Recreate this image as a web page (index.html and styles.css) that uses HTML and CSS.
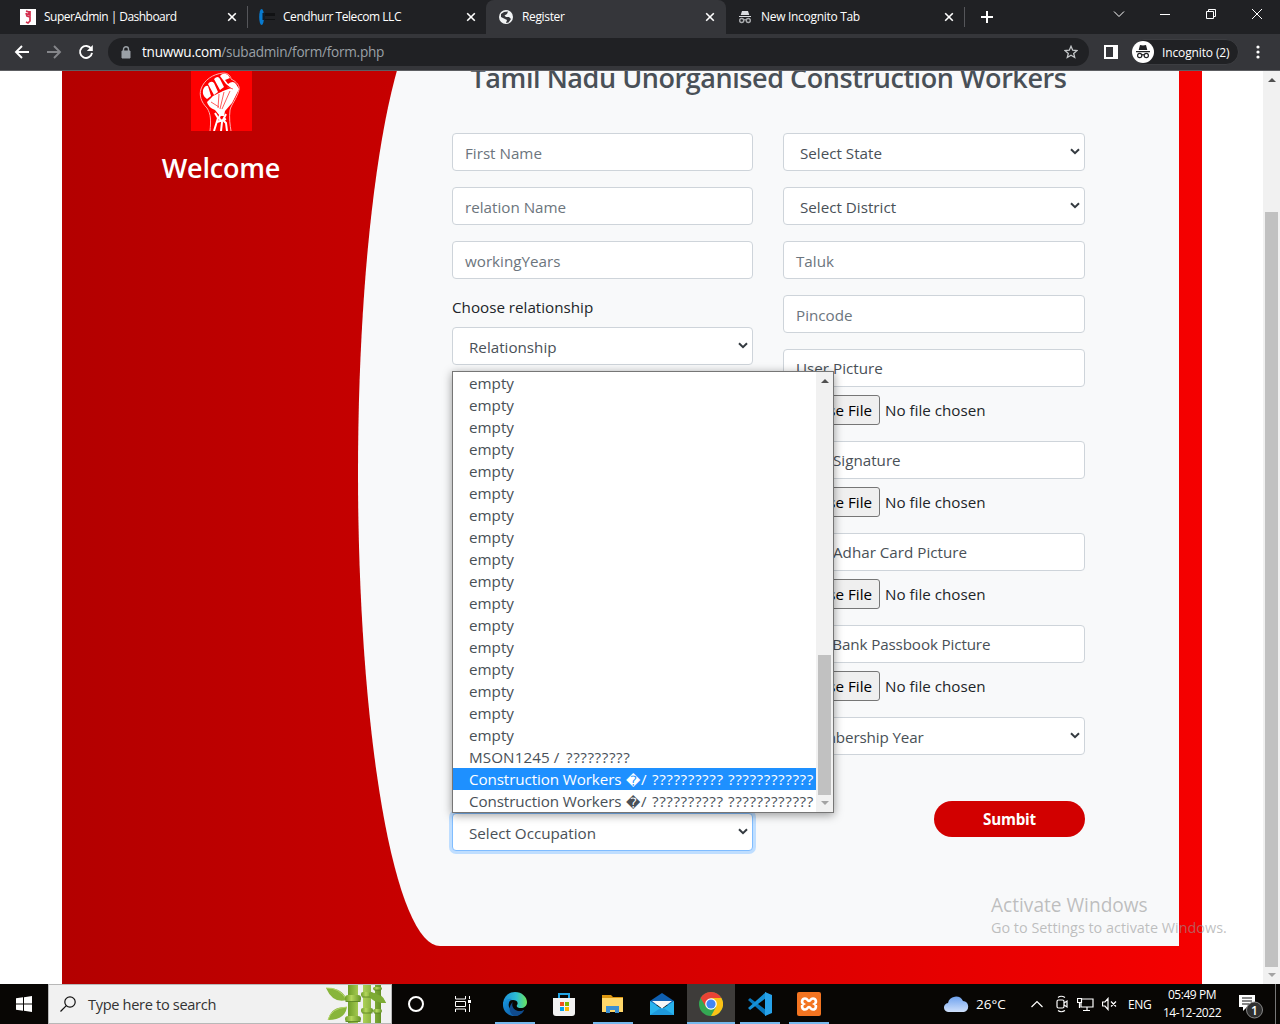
FILE: index.html
```html
<!DOCTYPE html>
<html lang="en">
<head>
<meta charset="utf-8">
<title>Register</title>
<link rel="stylesheet" href="styles.css">
</head>
<body>
<div class="screen">
  <header class="tabstrip">
    <div class="tab tab-first">
      <svg class="fav" viewBox="0 0 16 16"><path fill="#fff" d="M0 0h16v16H0z"/><path d="M6 2l3 1-1 2 2 1V2M6 4l1 3 3 1v4l-2 2-2-1" fill="none" stroke="#d3304f" stroke-width="1.7"/></svg>
      <span class="tab-t t1">SuperAdmin | Dashboard</span>
      <svg class="x" viewBox="0 0 10 10"><path d="M1.2 1.2l7.6 7.6M8.8 1.2L1.2 8.8"/></svg>
    </div>
    <div class="tab">
      <svg class="fav" viewBox="0 0 16 16"><path d="M6 4h10v3H6zM6 10h10v1H6z" fill="#111214"/><ellipse cx="2.6" cy="8" rx="2.4" ry="8" fill="#087bd0"/><path d="M3.5 4H6v7H3.500z" fill="#111b26"/></svg>
      <span class="tab-t t2">Cendhurr Telecom LLC</span>
      <svg class="x" viewBox="0 0 10 10"><path d="M1.2 1.2l7.6 7.6M8.8 1.2L1.2 8.8"/></svg>
    </div>
    <div class="tab active">
      <svg class="fav" viewBox="0 0 16 16"><circle cx="8" cy="8" r="7" fill="#f1f3f4"/><path d="M3 5l3-2 4-.5L9 5 6.500 6.500 8 8h3l2 2-2.500 3.500L8 14l1-3-3-1.500L3 8z" fill="#35363a"/></svg>
      <span class="tab-t t3">Register</span>
      <svg class="x" viewBox="0 0 10 10"><path d="M1.2 1.2l7.6 7.6M8.8 1.2L1.2 8.8"/></svg>
    </div>
    <div class="tab tab-last">
      <svg class="fav" viewBox="0 0 16 16"><path d="M5 2h6l1.300 4H3.700zM2 7h12v1H2z" fill="#dadce0"/><g fill="none" stroke="#a9abae" stroke-width="1.4"><circle cx="4.700" cy="11.500" r="2"/><circle cx="11.300" cy="11.500" r="2"/><path d="M6.700 11q1.300-.8 2.600 0"/></g></svg>
      <span class="tab-t t4">New Incognito Tab</span>
      <svg class="x" viewBox="0 0 10 10"><path d="M1.2 1.2l7.6 7.6M8.8 1.2L1.2 8.8"/></svg>
    </div>
    <svg class="plus" viewBox="0 0 12 12"><path d="M6 0v12M0 6h12"/></svg>
    <div class="winbtns">
      <svg viewBox="0 0 12 12"><path d="M1 3.500l5 5 5-5"/></svg>
      <svg viewBox="0 0 12 12"><path d="M1 6.500h10"/></svg>
      <svg viewBox="0 0 12 12"><path d="M1.500 3.500h7v7h-7zM3.500 3.500v-2h7v7h-2"/></svg>
      <svg viewBox="0 0 12 12"><path d="M1 1l10 10M11 1L1 11"/></svg>
    </div>
  </header>

  <nav class="toolbar">
    <svg class="nav" viewBox="0 0 16 16"><path d="M15 8H2M8 2L2 8l6 6" stroke="#fff"/></svg>
    <svg class="nav" viewBox="0 0 16 16"><path d="M1 8h13M8 2l6 6-6 6" stroke="#85868a"/></svg>
    <svg class="nav" viewBox="0 0 16 16"><path d="M13.200 4.800A6 6 0 1 0 14 8.800" stroke="#fff"/><path d="M14.800 1v6H8.800z" fill="#fff"/></svg>
    <div class="omni">
      <svg class="lock" viewBox="0 0 10 13"><path d="M1 5h8v7H1z" fill="#9aa0a6" stroke="#9aa0a6" stroke-linejoin="round"/><path d="M2.500 5V3.300a2.500 2.500 0 0 1 5 0V5" fill="none" stroke="#9aa0a6" stroke-width="1.4"/></svg>
      <span class="url"><b>tnuwwu.com</b>/subadmin/form/form.php</span>
      <svg class="star" viewBox="0 0 14 14"><path d="M7 1.300l1.700 3.900 4.200.4-3.200 2.800 1 4.100L7 10.300l-3.700 2.200 1-4.100L1.100 5.600l4.200-.4z"/></svg>
    </div>
    <svg class="panelicon" viewBox="0 0 14 14"><path d="M0 0h14v14H0zM2 2v10h7V2z" fill="#fff" fill-rule="evenodd"/></svg>
    <div class="chip">
      <svg viewBox="0 0 22 22"><circle cx="11" cy="11" r="11" fill="#fff"/><path d="M8 4l3 .6L14 4l1.300 5H6.700zM4 10h14v1.200H4z" fill="#202124"/><g fill="none" stroke="#202124" stroke-width="1.2"><circle cx="7.700" cy="14.500" r="2.100"/><circle cx="14.300" cy="14.500" r="2.100"/><path d="M9.800 14q1.200-.8 2.400 0"/></g></svg>
      <span>Incognito (2)</span>
    </div>
    <svg class="kebab" viewBox="0 0 4 14"><circle cx="2" cy="2" r="1.600"/><circle cx="2" cy="7" r="1.600"/><circle cx="2" cy="12" r="1.600"/></svg>
  </nav>

  <main class="viewport">
    <div class="page">
      <section class="register">
        <aside class="side">
          <svg class="fist" viewBox="0 0 61 61"><path fill="#f00" d="M0 0h61v61H0z"/>
            <path fill="none" stroke="#ffb0b0" d="M19 61c1-10 1-17-3-23-6-6-8-13-6-19 3-9 12-15 22-16 6 0 8 4 8 6 6 3 9 7 8 11-2 8-8 15-9 20-1 8 0 15 1 21"/>
            <path fill="#fff" d="M12 20q2-5 5-4l3 10-4 3q-5-3-4-9zM17 14q3-4 6-1l4 9-4 3zM23 9q4-4 6 0l4 8-4 3zM29 6q3-4 8-1l2 3-5 2 3 4q5-4 8 0l3 5-7 14-7 8-1 5h-4l-5-6q-7-3-8-8l6-6 10-5 8-3-5-4z"/>
            <path fill="none" stroke="#f33" stroke-width=".8" d="M20 32l8 5M28 24l-1 14M33 22l-4 17M39 21l-8 18M36 17l6 2"/>
            <path fill="none" stroke="#fff" stroke-width="2" d="M24 43l3 5-4 13M30 42l-2 6 3 4-1 9M35 44l-3 6 3 3 1 8M26 52l9-3"/>
          </svg>
          <h3>Welcome</h3>
        </aside>
        <div class="panel">
          <h3 class="heading"><span>Tamil Nadu Unorganised Construction Workers</span></h3>
          <form class="cols">
            <div class="col">
              <div class="field ph">First Name</div>
              <div class="field ph">relation Name</div>
              <div class="field ph">workingYears</div>
              <div class="group"><label class="lbl">Choose relationship</label>
                <div class="field sel">Relationship<svg class="caret" viewBox="0 0 10 7"><path d="M1 1.200l4 4 4-4"/></svg></div></div>
              <div class="field sel focus">Select Occupation<svg class="caret" viewBox="0 0 10 7"><path d="M1 1.200l4 4 4-4"/></svg></div>
            </div>
            <div class="col">
              <div class="field sel">Select State<svg class="caret" viewBox="0 0 10 7"><path d="M1 1.200l4 4 4-4"/></svg></div>
              <div class="field sel">Select District<svg class="caret" viewBox="0 0 10 7"><path d="M1 1.200l4 4 4-4"/></svg></div>
              <div class="field ph">Taluk</div>
              <div class="field ph">Pincode</div>
              <div class="group"><div class="field">User Picture</div><div class="file"><span class="fbtn">Choose File</span><span>No file chosen</span></div></div>
              <div class="group"><div class="field">User Signature</div><div class="file"><span class="fbtn">Choose File</span><span>No file chosen</span></div></div>
              <div class="group"><div class="field">User Adhar Card Picture</div><div class="file"><span class="fbtn">Choose File</span><span>No file chosen</span></div></div>
              <div class="group"><div class="field tight">User Bank Passbook Picture</div><div class="file"><span class="fbtn">Choose File</span><span>No file chosen</span></div></div>
              <div class="field sel tight">Membership Year<svg class="caret" viewBox="0 0 10 7"><path d="M1 1.200l4 4 4-4"/></svg></div>
              <div class="submit">Sumbit</div>
            </div>
          </form>
        </div>
      </section>
    </div>
    <div class="scroll page-scroll"><i class="up"></i><i class="thumb"></i><i class="down"></i></div>
  </main>

  <footer class="taskbar">
    <div class="start"><svg viewBox="0 0 16 16"><path fill="#fff" d="M0 2.300l7-1v6.200H0zM8 1.200L16 0v7.500H8zM0 8.500h7v6.200l-7-1zM8 8.500h8V16l-8-1.200z"/></svg></div>
    <div class="search">
      <svg class="mag" viewBox="0 0 16 16"><circle cx="10" cy="6" r="5.200"/><path d="M6.300 9.700L.5 15.500"/></svg>
      <span>Type here to search</span>
      <svg class="bamboo" viewBox="0 0 62 38">
        <defs><linearGradient id="bam"><stop offset="0" stop-color="#6f9e28"/><stop offset=".4" stop-color="#b4d75c"/><stop offset="1" stop-color="#659325"/></linearGradient></defs>
        <path d="M0 3q16-1 21 12Q7 19 0 3zM2 35q3-14 19-13-2 13-19 13zM40 8q16-3 20 10-12 1-17-7z" fill="#88b53b"/>
        <path d="M0 3q13-1 21 12M2 35q3-12 19-13" stroke="#b5d66c" fill="none"/>
        <g fill="url(#bam)"><path d="M22 0h10v38H22zM37 0h8v38h-8zM49 0h6v38h-6z"/><rect x="19" y="10" width="16" height="7" rx="3"/><rect x="19" y="31" width="16" height="6" rx="3"/><rect x="35" y="7" width="12" height="5" rx="2"/><rect x="35" y="23" width="12" height="5" rx="2"/><rect x="47" y="2" width="9" height="3" rx="1.500"/><rect x="47" y="24" width="9" height="4" rx="2"/></g>
        <path d="M19.500 16.500h15M19.500 36.500h15M36 12h10.500M36 28h10.500M48 5h7M48 28h7" stroke="#557d1e" stroke-width=".8"/>
        <path d="M43 8q12-1 17 10-9 1-17-7z" fill="#7dab34"/>
      </svg>
    </div>
    <div class="app w48"><svg width="18" height="18" viewBox="0 0 18 18"><circle cx="9" cy="9" r="7" fill="none" stroke="#fff" stroke-width="2"/></svg></div>
    <div class="app w50"><svg width="18" height="18" viewBox="0 0 18 18"><path d="M1.500 1v3h10V1M1.500 17v-3h10v3M1.500 6.500h10v5h-10zM15.500 1v3M15.500 9v8" fill="none" stroke="#fff"/><path d="M14 5h3v3h-3z" fill="#fff"/></svg></div>
    <div class="app run"><svg width="24" height="24" viewBox="0 0 24 24">
      <defs><linearGradient id="e1" x1="0" x2="1"><stop offset="0" stop-color="#1d8fd8"/><stop offset=".55" stop-color="#2cbcd5"/><stop offset="1" stop-color="#6be45c"/></linearGradient><linearGradient id="e2" x1="0" x2="1" y2="1"><stop offset="0" stop-color="#1797df"/><stop offset="1" stop-color="#0c4f9c"/></linearGradient></defs>
      <path d="M0 11C1 4 6 0 12 0c7 0 12 5 12 10 0 4-3 6-6 6-3 0-5-1-4-3 2-3-1-5-4-5-5 0-9 3-10 6z" fill="url(#e1)"/><path d="M0 13c0-4 4-7 9-6-3 2-4 5-3 8 2 5 9 6 15 3-2 4-6 6-10 6C5 24 0 19 0 13z" fill="url(#e2)"/><path d="M10 10c-2 3 0 8 5 9 3 .6 5 0 6-1-2 4-6 6-9 6-5-1-8-9-2-14z" fill="#104b8e"/></svg></div>
    <div class="app"><svg width="24" height="24" viewBox="0 0 24 24"><path d="M7 7V2h10v5" fill="none" stroke="#23a6e6" stroke-width="2"/><path d="M1 6h22v15q0 3-3 3H4q-3 0-3-3z" fill="#f2f2f2"/><path d="M8 10h4v4H8z" fill="#f25022"/><path d="M13 10h4v4h-4z" fill="#7fba00"/><path d="M8 15h4v4H8z" fill="#00a4ef"/><path d="M13 15h4v4h-4z" fill="#ffb900"/></svg></div>
    <div class="app run"><svg width="24" height="24" viewBox="0 0 24 24"><path d="M1 3h9l2 2h10v4H1z" fill="#dc9610"/><path d="M1 6h21v14H1z" fill="#ffd76a"/><path d="M5 21v-7h13v7h-4v-3H9v3z" fill="#3c8fd2"/></svg></div>
    <div class="app"><svg width="24" height="24" viewBox="0 0 24 24"><path d="M0 9l12-8 12 8v4H0z" fill="#0f5fb0"/><path d="M0 9v14h24V9l-12 8z" fill="#29b3ee"/><path d="M0 23l12-8 12 8z" fill="#1e98dc"/><path d="M2 9h20l-10 7.500z" fill="#f7f7f7"/></svg></div>
    <div class="app run current"><svg width="24" height="24" viewBox="0 0 24 24"><circle cx="12" cy="12" r="12" fill="#34a853"/><path d="M1.600 6A12 12 0 0 1 22.400 6H12L7 15z" fill="#ea4335"/><path d="M22.400 6A12 12 0 0 1 12 24l5-9-5-9z" fill="#fbc116"/><circle cx="12" cy="12" r="5.800" fill="#fff"/><circle cx="12" cy="12" r="4.600" fill="#4285f4"/></svg></div>
    <div class="app run"><svg width="24" height="24" viewBox="0 0 24 24"><path d="M0 8l2-2 16 12v6z" fill="#0877bd"/><path d="M0 16l2 2L18 6V0z" fill="#1690d6"/><path d="M17 0l7 3v18l-7 3z" fill="#27a2ea"/></svg></div>
    <div class="app run"><svg width="24" height="24" viewBox="0 0 24 24"><rect width="24" height="24" rx="2" fill="#f37421"/><path d="M8 6.500c3 0 2 2.500 4 2.500s1-2.500 4-2.500 4 4 1.500 5.500c2.500 1.500 1.500 5.500-1.500 5.500s-2-2.500-4-2.500-1 2.500-4 2.500S4 13.500 6.500 12C4 10.500 5 6.500 8 6.500z" fill="none" stroke="#fff" stroke-width="2.600"/></svg></div>
    <div class="tray">
      <svg width="25" height="18" viewBox="0 0 25 18"><defs><linearGradient id="cl" x1="0" y1="0" x2="0" y2="1"><stop offset="0" stop-color="#6fa2ee"/><stop offset="1" stop-color="#cfe0fb"/></linearGradient></defs><path d="M5 17a4.500 4.500 0 0 1-1-9 8 8 0 0 1 15-2 5.600 5.600 0 0 1 1 11z" fill="url(#cl)"/></svg>
      <span class="temp">26°C</span>
      <svg width="12" height="8" viewBox="0 0 12 8" class="line"><path d="M.5 7L6 1.500 11.500 7"/></svg>
      <svg width="12" height="18" viewBox="0 0 12 18" class="line"><rect x="1" y="5" width="7" height="8" rx="1.500"/><path d="M8 8l3-2v6l-3-2M2 2.500q3-2.500 7 0M2 15.500q3 2.500 7 0"/></svg>
      <svg width="17" height="16" viewBox="0 0 17 16" class="line"><path d="M5 3h11v8H4V7M10 11v3M6 14.500h7M.5 2.500h4v4h-4zM2.500 6v6"/></svg>
      <svg width="15" height="14" viewBox="0 0 15 14" class="line"><path d="M.5 5h2.500l3-3.500v11L3 9H.5zM9 4.500l5 5M14 4.500l-5 5"/></svg>
      <span class="lang">ENG</span>
      <div class="clock"><span>05:49 PM</span><span>14-12-2022</span></div>
      <svg width="25" height="26" viewBox="0 0 25 26" class="note"><path d="M1 2h16v12H9l-4 4v-4H1z" fill="#fff"/><path d="M4 5h10M4 8h10M4 11h7" stroke="#111"/><circle cx="16.500" cy="17" r="8" fill="#303030" stroke="#888"/><text x="16.500" y="21.500" text-anchor="middle">1</text></svg>
    </div>
  </footer>

  <div class="popup">
    <ul class="options">
      <li>empty</li><li>empty</li><li>empty</li><li>empty</li><li>empty</li><li>empty</li><li>empty</li><li>empty</li><li>empty</li><li>empty</li><li>empty</li><li>empty</li><li>empty</li><li>empty</li><li>empty</li><li>empty</li><li>empty</li>
      <li><span class="mson">MSON1245 /</span><span class="q1">?????????</span></li>
      <li class="hot"><span class="cw">Construction Workers</span><span class="rep">�</span><span class="sl">/</span><span class="q2">??????????</span><span class="q3">????????????</span></li>
      <li><span class="cw">Construction Workers</span><span class="rep">�</span><span class="sl">/</span><span class="q2">??????????</span><span class="q3">????????????</span></li>
    </ul>
    <div class="scroll pop-scroll"><i class="up"></i><i class="thumb"></i><i class="down"></i></div>
  </div>
  <div class="watermark"><div class="wm1">Activate Windows</div><div class="wm2">Go to Settings to activate Windows.</div></div>
</div>
</body>
</html>
```
FILE: styles.css
```css
* { box-sizing: border-box; }
body { margin: 0; font-family: "Open Sans", "Noto Sans", sans-serif; font-size: 15.2px; color: #212529; }
svg { display: block; flex: none; }
h3 { margin: 0; font-weight: 600; }
.screen { position: relative; width: 1280px; height: 1024px; overflow: hidden; display: flex; flex-direction: column; background: #fff; }

.tabstrip { height: 34px; flex: none; background: #202124; display: flex; align-items: center; color: #fff; font-size: 12px; }
.tab { width: 239px; height: 34px; display: flex; align-items: center; padding: 0 10px 0 11px; border-left: 1px solid transparent; flex: none; }
.tab-first { width: 247px; padding-left: 19px; padding-right: 10px; }
.tab:nth-child(2) { border-image: linear-gradient(transparent 7px, #55565a 7px, #55565a 27px, transparent 27px) 1; border-width: 0 0 0 1px; border-style: solid; }
.tab.active { background: #35363a; border-radius: 8px 8px 0 0; width: 240px; padding-right: 11px; }
.tab-last { border-left: 0; width: 239px; padding-right: 11px; background: linear-gradient(#55565a, #55565a) right center / 1px 20px no-repeat; }
.fav { width: 16px; height: 16px; margin-right: 8px; }
.tab-t { flex: 1; white-space: nowrap; margin-top: -1px; }
.t1 { letter-spacing: -.53px; }
.t2 { letter-spacing: -.45px; }
.t3 { letter-spacing: -.35px; }
.t4 { letter-spacing: -.3px; }
.x { width: 10px; height: 10px; stroke: #fff; stroke-width: 1.6; fill: none; }
.plus { width: 12px; height: 12px; margin-left: 16px; stroke: #fff; stroke-width: 2; }
.winbtns { display: flex; gap: 34px; margin: -6px 17px 0 auto; }
.winbtns svg { width: 12px; height: 12px; fill: none; stroke: #fff; }

.toolbar { height: 37px; flex: none; background: #35363a; border-bottom: 1px solid #5d5e62; display: flex; align-items: center; padding: 0 20px 0 14px; color: #fff; }
.nav { width: 16px; height: 16px; margin-right: 16px; fill: none; stroke-width: 1.9; }
.omni { width: 981px; height: 28px; margin-left: -2px; border-radius: 14px; background: #202124; display: flex; align-items: center; padding: 0 11px 0 13px; }
.lock { width: 10px; height: 13px; margin-right: 11px; }
.url { flex: 1; font-size: 13.6px; letter-spacing: -.25px; color: #9aa0a6; margin-top: -1px; }
.url b { font-weight: 400; color: #fff; }
.star { width: 14px; height: 14px; fill: none; stroke: #c4c7c9; stroke-width: 1.3; }
.panelicon { width: 14px; height: 14px; margin: 0 13px 0 15px; }
.chip { width: 108px; height: 26px; border-radius: 13px; background: #202124; border: 1px solid #3c3d41; display: flex; align-items: center; gap: 8px; font-size: 12px; letter-spacing: -.13px; white-space: nowrap; }
.chip svg { width: 22px; height: 22px; }
.kebab { width: 4px; height: 14px; margin-left: auto; fill: #fff; }

.viewport { height: 913px; flex: none; display: flex; overflow: hidden; background: #fff; }
.page { width: 1263px; padding-left: 62px; }
.register { width: 1140px; height: 1100px; margin-top: -71px; background: linear-gradient(90deg, #b30000, #f50000); display: flex; }
.side { width: 296px; padding: 71px 0 0 22px; display: flex; flex-direction: column; align-items: center; color: #fff; }
.fist { width: 61px; height: 61px; margin-top: -1px; }
.side h3 { font-size: 27px; letter-spacing: -.2px; line-height: 34px; margin-top: 20px; }
.panel { width: 821px; height: 946px; background: #f8f9fa; border-radius: 10% 0 0 10% / 50% 0 0 50%; padding: 61px 94px 0; color: #495057; }
.heading { font-size: 27px; letter-spacing: -.44px; line-height: 34px; text-align: center; white-space: nowrap; }
.cols { display: grid; grid-template-columns: 301px 302px; column-gap: 30px; margin-top: 38px; }
.col { display: flex; flex-direction: column; gap: 16px; }
.field { height: 38px; flex: none; border: 1px solid #ced4da; border-radius: 4px; background: #fff; padding: 0 12px; display: flex; align-items: center; justify-content: space-between; white-space: nowrap; color: #495057; }
.field.ph { color: #6c757d; padding-top: 1px; }
.field.sel { padding: 1px 4px 0 16px; }
.field.tight { letter-spacing: -.13px; }
.caret { width: 10px; height: 7px; margin-top: -2px; fill: none; stroke: #343a40; stroke-width: 2; }
.lbl { display: block; height: 24px; line-height: 25px; margin-bottom: 8px; color: #212529; }
.field.focus { margin-top: 432px; border-color: #80bdff; box-shadow: 0 0 0 3px #bfdeff; }
.file { display: flex; align-items: center; gap: 5px; height: 30px; margin-top: 8px; color: #212529; white-space: nowrap; }
.fbtn { width: 97px; height: 30px; border: 1px solid #767676; border-radius: 3px; background: #efefef; color: #000; line-height: 29px; text-align: right; padding-right: 7px; }
.submit { align-self: flex-end; width: 151px; height: 36px; margin-top: 30px; border-radius: 18px; background: #d20000; color: #fff; font-weight: 700; letter-spacing: -.2px; line-height: 36px; text-align: center; }

.scroll { width: 17px; background: #f1f1f1; display: flex; flex-direction: column; align-items: center; }
.scroll i { display: block; }
.up, .down { border: 4px solid transparent; border-top: 0; border-bottom: 4px solid #505050; }
.down { border-bottom: 0; border-top: 4px solid #a3a3a3; margin-bottom: 7px; }
.up { margin-top: 7px; }
.thumb { width: 13px; background: #c1c1c1; }
.page-scroll .thumb { height: 755px; margin-top: 130px; }
.page-scroll .down { margin-top: 6px; }

.popup { position: absolute; left: 452px; top: 371px; width: 382px; height: 442px; border: 1px solid #767676; background: #fff; display: flex; box-shadow: 0 2px 9px rgba(0,0,0,.4); }
.options { list-style: none; margin: 0; padding: 0; width: 363px; color: #495057; }
.options li { height: 22px; line-height: 23px; padding-left: 16px; display: flex; white-space: pre; }
.options .hot { background: #1e90ff; color: #fff; }
.mson { width: 97px; letter-spacing: .1px; }
.cw { width: 157px; letter-spacing: -.1px; }
.rep { width: 15px; font-family: "DejaVu Sans", sans-serif; font-size: 14px; line-height: 26px; }
.sl { width: 11px; }
.q2 { width: 76px; }
.q1, .q2, .q3 { letter-spacing: .6px; }
.pop-scroll .thumb { height: 140px; margin-top: 272px; }
.pop-scroll .down { margin-top: 6px; }

.taskbar { height: 40px; flex: none; background: #080604; display: flex; color: #fff; }
.start { width: 48px; display: flex; align-items: center; justify-content: center; }
.start svg { width: 16px; height: 16px; }
.search { width: 344px; height: 40px; background: #f1f1f1; border: 1px solid #b8b8b8; display: flex; align-items: center; color: #333; padding-left: 11px; }
.mag { width: 16px; height: 16px; margin-right: 12px; fill: none; stroke: #111; stroke-width: 1.2; }
.bamboo { width: 62px; height: 38px; margin-left: auto; margin-right: 3px; }
.search span { font-size: 14.6px; letter-spacing: -.33px; white-space: nowrap; }
.app { width: 49px; display: flex; align-items: center; justify-content: center; }
.w48 { width: 48px; }
.w50 { width: 50px; padding-right: 5px; }
.run { background: linear-gradient(#76b9ed, #76b9ed) bottom / 40px 2px no-repeat; }
.current { background: linear-gradient(#76b9ed, #76b9ed) bottom / 100% 2px no-repeat, #3e3c3a; width: 48px; margin-left: 1px; }
.tray { flex: 1; display: flex; align-items: center; padding-left: 111px; border-right: 1px solid #777; margin-right: 4px; }
.temp { font-size: 13.5px; width: 55px; margin-left: 7px; }
.line { fill: none; stroke: #fff; stroke-width: 1.2; margin-right: 13px; }
.line + .line { margin-right: 9px; }
.line:nth-of-type(4) { margin-right: 8px; }
.lang { font-size: 12px; letter-spacing: -.3px; width: 35px; margin-left: 2px; }
.clock { width: 58px; display: flex; flex-direction: column; align-items: center; font-size: 12px; line-height: 18px; white-space: nowrap; letter-spacing: -.45px; margin-top: -1px; }
.note { margin-left: 17px; margin-top: 4px; }
.note text { fill: #fff; font-size: 12px; font-weight: 600; }
.watermark { position: absolute; left: 991px; top: 892px; color: rgba(150,150,150,.6); white-space: nowrap; }
.wm1 { font-size: 19.1px; line-height: 26px; }
.wm2 { font-size: 14.4px; line-height: 20px; }
```
